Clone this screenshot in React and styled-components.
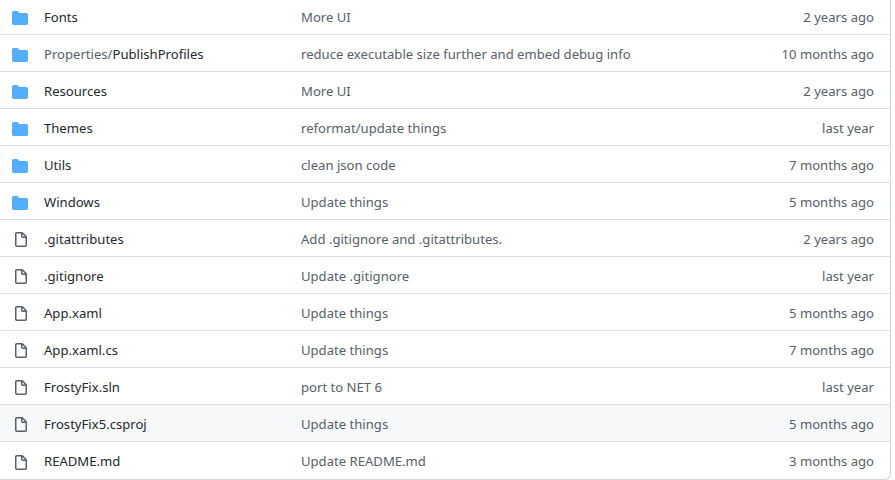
import React from 'react'
import styled, { createGlobalStyle } from 'styled-components'

const files = [
  { type: 'dir', name: 'Fonts', message: 'More UI', age: '2 years ago' },
  { type: 'dir', prefix: 'Properties/', name: 'PublishProfiles', message: 'reduce executable size further and embed debug info', age: '10 months ago' },
  { type: 'dir', name: 'Resources', message: 'More UI', age: '2 years ago' },
  { type: 'dir', name: 'Themes', message: 'reformat/update things', age: 'last year' },
  { type: 'dir', name: 'Utils', message: 'clean json code', age: '7 months ago' },
  { type: 'dir', name: 'Windows', message: 'Update things', age: '5 months ago' },
  { type: 'file', name: '.gitattributes', message: 'Add .gitignore and .gitattributes.', age: '2 years ago' },
  { type: 'file', name: '.gitignore', message: 'Update .gitignore', age: 'last year' },
  { type: 'file', name: 'App.xaml', message: 'Update things', age: '5 months ago' },
  { type: 'file', name: 'App.xaml.cs', message: 'Update things', age: '7 months ago' },
  { type: 'file', name: 'FrostyFix.sln', message: 'port to NET 6', age: 'last year' },
  { type: 'file', name: 'FrostyFix5.csproj', message: 'Update things', age: '5 months ago', hovered: true },
  { type: 'file', name: 'README.md', message: 'Update README.md', age: '3 months ago' },
]

function FolderIcon() {
  return (
    <svg width="16" height="16" viewBox="0 0 16 16" fill="#54aeff">
      <path d="M1.75 1A1.75 1.75 0 000 2.75v10.5C0 14.216.784 15 1.75 15h12.5A1.75 1.75 0 0016 13.25v-8.5A1.75 1.75 0 0014.25 3H7.5a.25.25 0 01-.2-.1l-.9-1.2C6.07 1.26 5.55 1 5 1H1.75z" />
    </svg>
  )
}

function FileIcon() {
  return (
    <FileSvg width="16" height="16" viewBox="0 0 16 16" fill="#57606a">
      <path fillRule="evenodd" d="M3.75 1.5a.25.25 0 00-.25.25v11.5c0 .138.112.25.25.25h8.5a.25.25 0 00.25-.25V6H9.75A1.75 1.75 0 018 4.25V1.5H3.75zm5.75.56v2.19c0 .138.112.25.25.25h2.19L9.5 2.06zM2 1.75C2 .784 2.784 0 3.75 0h5.086c.464 0 .909.184 1.237.513l3.414 3.414c.329.328.513.773.513 1.237v8.086A1.75 1.75 0 0112.25 15h-8.5A1.75 1.75 0 012 13.25V1.75z" />
    </FileSvg>
  )
}

export default function App() {
  return (
    <>
      <GlobalStyle />
      <Page>
        <List>
          {files.map((file) => (
            <Row key={file.name} $hovered={file.hovered}>
              <IconCell>{file.type === 'dir' ? <FolderIcon /> : <FileIcon />}</IconCell>
              <Name>
                {file.prefix && <Prefix>{file.prefix}</Prefix>}
                {file.name}
              </Name>
              <Message>{file.message}</Message>
              <Age>{file.age}</Age>
            </Row>
          ))}
        </List>
      </Page>
    </>
  )
}

const GlobalStyle = createGlobalStyle`
  html, body {
    margin: 0;
    background: #fff;
  }
`

const Page = styled.div`
  width: 895px;
  height: 480px;
  overflow: hidden;
  font-family: "Noto Sans", "Open Sans", sans-serif;
  font-size: 13.1px;
`

// the top of the list is cut off by the crop of the screenshot
const List = styled.div`
  width: 891px;
  margin-top: -2px;
  box-sizing: border-box;
  border-right: 1px solid #d0d7de;
  border-bottom: 1px solid #d0d7de;
  border-bottom-right-radius: 6px;
`

const Row = styled.div`
  display: grid;
  grid-template-columns: 44px 257px 1fr 116px;
  align-items: center;
  height: 37px;
  padding-top: 1px;
  box-sizing: border-box;
  background: ${(p) => (p.$hovered ? '#f6f8fa' : 'transparent')};
  border-bottom: 1px solid #d8dee4;

  &:last-child {
    border-bottom: none;
    border-bottom-right-radius: 6px;
  }
`

const IconCell = styled.div`
  display: flex;
  padding: 3px 0 0 12px;
`

// sits half a pixel right, like the soft edges in the screenshot
const FileSvg = styled.svg`
  margin-left: 0.5px;
`

const Name = styled.div`
  color: #24292f;
`

const Prefix = styled.span`
  color: #57606a;
`

const Message = styled.div`
  color: #57606a;
`

const Age = styled.div`
  color: #57606a;
  text-align: right;
  padding-right: 16px;
`
